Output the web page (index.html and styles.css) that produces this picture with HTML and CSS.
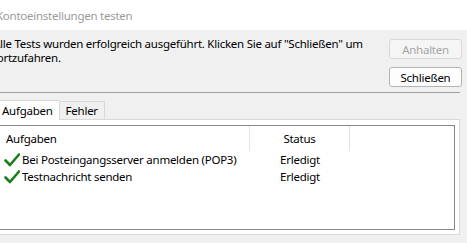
FILE: index.html
```html
<!DOCTYPE html>
<html lang="de">
<head>
    <meta charset="UTF-8">
    <title>Kontoeinstellungen testen</title>
    <link rel="stylesheet" href="styles.css">
</head>
<body>
    <div class="titlebar">
        <span class="title">Kontoeinstellungen testen</span>
    </div>
    <div class="dialog">
        <div class="top">
            <div class="message">Alle Tests wurden erfolgreich ausgeführt. Klicken Sie auf "Schließen" um fortzufahren.</div>
            <div class="buttons">
                <button class="btn" disabled>Anhalten</button>
                <button class="btn">Schließen</button>
            </div>
        </div>
        <div class="separator"></div>
        <div class="tabs">
            <div class="tab active">Aufgaben</div>
            <div class="tab">Fehler</div>
        </div>
        <div class="panel">
            <div class="listview">
                <div class="row header">
                    <div class="cell task">Aufgaben</div>
                    <div class="cell status">Status</div>
                    <div class="cell rest"></div>
                </div>
                <div class="row">
                    <div class="cell task">
                        <svg class="check" viewBox="0 0 16 16"><path d="M1.5 8.5 L6 13 L15 2.5" /></svg>
                        Bei Posteingangsserver anmelden (POP3)
                    </div>
                    <div class="cell status">Erledigt</div>
                    <div class="cell rest"></div>
                </div>
                <div class="row">
                    <div class="cell task">
                        <svg class="check" viewBox="0 0 16 16"><path d="M1.5 8.5 L6 13 L15 2.5" /></svg>
                        Testnachricht senden
                    </div>
                    <div class="cell status">Erledigt</div>
                    <div class="cell rest"></div>
                </div>
            </div>
        </div>
    </div>
</body>
</html>
```

FILE: styles.css
```css
* {
    box-sizing: border-box;
}
body, html {
    margin: 0;
    padding: 0;
    height: 100%;
    overflow: hidden;
    background: #f0f0f0;
    font-family: "Segoe UI", "Noto Sans", sans-serif;
    font-size: 11.5px;
    letter-spacing: -0.25px;
    color: #000;
}
.titlebar {
    height: 30px;
    background: #fff;
    display: flex;
    align-items: center;
    overflow: hidden;
}
.title {
    color: #9a9a9a;
    margin-left: -4px;
    white-space: nowrap;
}
.dialog {
    margin-left: -10px;
    margin-right: 5px;
}
.top {
    display: flex;
    justify-content: space-between;
    padding-top: 9px;
}
.message {
    width: 380px;
    padding-left: 3px;
    line-height: 14px;
    margin-top: -2px;
}
.buttons {
    display: flex;
    flex-direction: column;
    gap: 8px;
}
.btn {
    width: 73px;
    height: 20px;
    font: inherit;
    letter-spacing: inherit;
    background: #fdfdfd;
    border: 1px solid #b4b4b4;
    border-radius: 3px;
    padding: 0;
    color: #000;
}
.btn:disabled {
    background: #f5f5f5;
    border-color: #d9d9d9;
    color: #a6a6a6;
}
.separator {
    border-top: 1px solid #a0a0a0;
    margin-top: 5px;
    margin-right: 2px;
}
.tabs {
    display: flex;
    align-items: flex-end;
    margin-top: 5px;
    margin-left: 5px;
    height: 21px;
}
.tab {
    height: 18px;
    padding: 0 6px;
    line-height: 17px;
    border: 1px solid #d9d9d9;
    border-bottom: none;
    background: #f0f0f0;
}
.tab.active {
    height: 20px;
    line-height: 19px;
    background: #fff;
    border-right: none;
    margin-bottom: -1px;
    position: relative;
}
.panel {
    margin-left: 5px;
    margin-right: 2px;
    height: 116px;
    background: #fff;
    border: 1px solid #d9d9d9;
    padding: 5px 4px 4px 0;
}
.listview {
    height: 105px;
    border: 1px solid #828790;
    background: #fff;
}
.row {
    display: flex;
    height: 17px;
    line-height: 17px;
}
.row.header {
    height: 25px;
    line-height: 25px;
}
.cell {
    white-space: nowrap;
}
.task {
    width: 253px;
    padding-left: 7px;
    display: flex;
    align-items: center;
    gap: 2px;
}
.header .task {
    padding-left: 9px;
}
.status {
    width: 100px;
    text-align: center;
}
.header .cell {
    border-right: 1px solid #e5e5e5;
}
.header .rest {
    border-right: none;
}
.check {
    width: 16px;
    height: 16px;
    flex: none;
}
.check path {
    fill: none;
    stroke: #1a7f1a;
    stroke-width: 2.6;
    stroke-linecap: round;
    stroke-linejoin: round;
}
```
